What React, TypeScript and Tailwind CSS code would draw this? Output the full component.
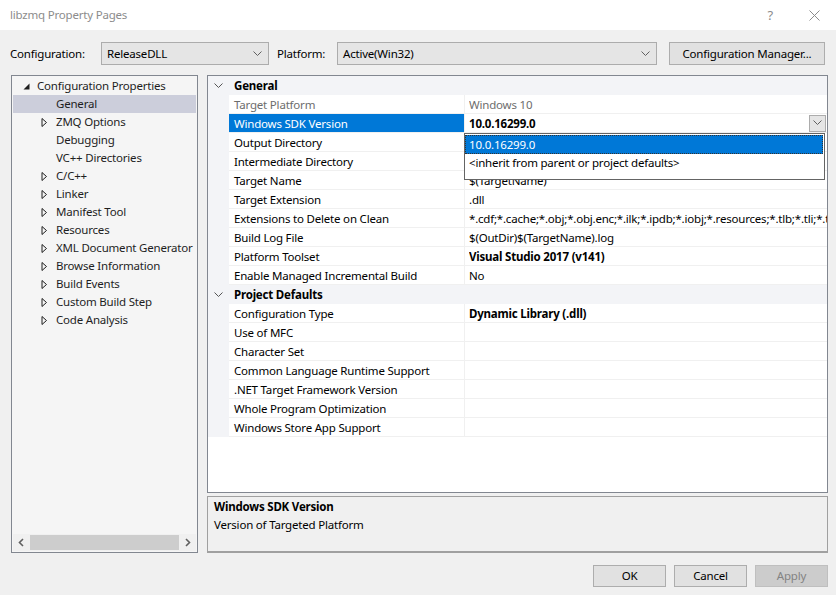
import React from 'react';

const font = "font-['Noto_Sans',sans-serif]";

const Chevron = ({ className = '' }: { className?: string }) => (
  <svg width="9" height="6" viewBox="0 0 9 6" className={className}>
    <path d="M0.5 0.5 L4.5 4.5 L8.5 0.5" fill="none" stroke="currentColor" strokeWidth="1" />
  </svg>
);

const Collapsed = () => (
  <svg width="7" height="9" viewBox="0 0 7 9">
    <path d="M1 0.5 L5.5 4.5 L1 8.5 Z" fill="none" stroke="#1e1e1e" strokeWidth="1" />
  </svg>
);

const Expanded = () => (
  <svg width="7" height="7" viewBox="0 0 7 7">
    <path d="M6.5 0.5 L6.5 6.5 L0.5 6.5 Z" fill="#1e1e1e" />
  </svg>
);

const treeItems: { label: string; expandable: boolean; selected?: boolean }[] = [
  { label: 'General', expandable: false, selected: true },
  { label: 'ZMQ Options', expandable: true },
  { label: 'Debugging', expandable: false },
  { label: 'VC++ Directories', expandable: false },
  { label: 'C/C++', expandable: true },
  { label: 'Linker', expandable: true },
  { label: 'Manifest Tool', expandable: true },
  { label: 'Resources', expandable: true },
  { label: 'XML Document Generator', expandable: true },
  { label: 'Browse Information', expandable: true },
  { label: 'Build Events', expandable: true },
  { label: 'Custom Build Step', expandable: true },
  { label: 'Code Analysis', expandable: true },
];

type Row =
  | { kind: 'cat'; label: string }
  | { kind: 'prop'; name: string; value: string; bold?: boolean; grey?: boolean; active?: boolean };

const rows: Row[] = [
  { kind: 'cat', label: 'General' },
  { kind: 'prop', name: 'Target Platform', value: 'Windows 10', grey: true },
  { kind: 'prop', name: 'Windows SDK Version', value: '10.0.16299.0', bold: true, active: true },
  { kind: 'prop', name: 'Output Directory', value: '$(SolutionDir)$(Configuration)\\' },
  { kind: 'prop', name: 'Intermediate Directory', value: '$(Configuration)\\' },
  { kind: 'prop', name: 'Target Name', value: '$(TargetName)' },
  { kind: 'prop', name: 'Target Extension', value: '.dll' },
  {
    kind: 'prop',
    name: 'Extensions to Delete on Clean',
    value:
      '*.cdf;*.cache;*.obj;*.obj.enc;*.ilk;*.ipdb;*.iobj;*.resources;*.tlb;*.tli;*.tlh;*.tmp;*.rsp;*.pgc;*.pgd;*.meta;*.tlog;*.manifest;*.res;*.pch;*.exp',
  },
  { kind: 'prop', name: 'Build Log File', value: '$(OutDir)$(TargetName).log' },
  { kind: 'prop', name: 'Platform Toolset', value: 'Visual Studio 2017 (v141)', bold: true },
  { kind: 'prop', name: 'Enable Managed Incremental Build', value: 'No' },
  { kind: 'cat', label: 'Project Defaults' },
  { kind: 'prop', name: 'Configuration Type', value: 'Dynamic Library (.dll)', bold: true },
  { kind: 'prop', name: 'Use of MFC', value: '' },
  { kind: 'prop', name: 'Character Set', value: '' },
  { kind: 'prop', name: 'Common Language Runtime Support', value: '' },
  { kind: 'prop', name: '.NET Target Framework Version', value: '' },
  { kind: 'prop', name: 'Whole Program Optimization', value: '' },
  { kind: 'prop', name: 'Windows Store App Support', value: '' },
];

const Combo = ({ value, width }: { value: string; width: string }) => (
  <div className={`${width} h-[23px] flex items-center justify-between bg-[#e5e5e5] border border-[#acacac] pl-[5px] pr-[6px] text-[#000]`}>
    <span>{value}</span>
    <Chevron className="text-[#606060]" />
  </div>
);

const Button = ({ label, disabled }: { label: string; disabled?: boolean }) => (
  <div
    className={`w-[73px] h-[22px] flex items-center justify-center border ${
      disabled ? 'bg-[#cccccc] border-[#bfbfbf] text-[#838383]' : 'bg-[#e1e1e1] border-[#adadad] text-[#000]'
    }`}
  >
    {label}
  </div>
);

export default function App() {
  return (
    <div className={`w-[836px] h-[595px] bg-[#f0f0f0] flex flex-col text-[11.5px] tracking-[-0.2px] leading-none overflow-hidden ${font}`}>
      {/* title bar */}
      <div className="h-[30px] bg-white flex items-center justify-between pl-[10px] pr-[16px] shrink-0">
        <span className="text-[#8c8c8c]">libzmq Property Pages</span>
        <div className="flex items-center gap-[36px] text-[#8c8c8c]">
          <span className="text-[13px]">?</span>
          <svg width="11" height="11" viewBox="0 0 11 11">
            <path d="M0.5 0.5 L10.5 10.5 M10.5 0.5 L0.5 10.5" stroke="#8c8c8c" strokeWidth="1" />
          </svg>
        </div>
      </div>

      {/* configuration row */}
      <div className="h-[45px] flex items-start pt-[12px] pl-[10px] shrink-0">
        <span className="w-[91px] h-[23px] flex items-center">Configuration:</span>
        <Combo value="ReleaseDLL" width="w-[168px]" />
        <span className="ml-[8px] w-[60px] h-[23px] flex items-center">Platform:</span>
        <Combo value="Active(Win32)" width="w-[320px]" />
        <div className="ml-[12px] w-[156px] h-[23px] flex items-center justify-center bg-[#e1e1e1] border border-[#adadad]">
          Configuration Manager...
        </div>
      </div>

      {/* main area */}
      <div className="flex h-[478px] pl-[11px] shrink-0">
        {/* tree */}
        <div className="w-[187px] border border-[#828790] bg-[#f5f5f5] flex flex-col">
          <div className="flex-1 pt-[1px] text-[#1e1e1e] overflow-hidden">
            <div className="h-[18px] flex items-center">
              <span className="w-[25px] shrink-0 flex justify-end pr-[7px]">
                <Expanded />
              </span>
              <span>Configuration Properties</span>
            </div>
            {treeItems.map((item) => (
              <div
                key={item.label}
                className={`h-[18px] flex items-center mx-[1px] whitespace-nowrap ${item.selected ? 'bg-[#cccedb]' : ''}`}
              >
                <span className="w-[43px] shrink-0 flex justify-end pr-[8px]">{item.expandable && <Collapsed />}</span>
                <span>{item.label}</span>
              </div>
            ))}
          </div>
          {/* horizontal scrollbar */}
          <div className="h-[17px] mb-[1px] bg-[#f0f0f0] flex items-center mx-[1px]">
            <svg width="17" height="17" viewBox="0 0 17 17">
              <path d="M10 5 L6.5 8.5 L10 12" fill="none" stroke="#606060" strokeWidth="1.6" />
            </svg>
            <div className="h-[15px] flex-1 bg-[#cdcdcd]" />
            <svg width="17" height="17" viewBox="0 0 17 17">
              <path d="M7 5 L10.5 8.5 L7 12" fill="none" stroke="#606060" strokeWidth="1.6" />
            </svg>
          </div>
        </div>

        {/* right column */}
        <div className="ml-[9px] w-[621px] flex flex-col">
          {/* grid */}
          <div className="h-[418px] border border-[#828790] bg-white relative">
            {rows.map((row, i) =>
              row.kind === 'cat' ? (
                <div key={i} className="h-[19px] flex items-center bg-[#f3f4f7] font-bold text-[#000]">
                  <span className="w-[21px] flex justify-center text-[#555]">
                    <Chevron />
                  </span>
                  <span className="pl-[5px]">{row.label}</span>
                </div>
              ) : (
                <div key={i} className="h-[19px] flex relative">
                  <div className="w-[21px] bg-[#f3f4f7]" />
                  <div
                    className={`w-[236px] flex items-center pl-[5px] pt-[1px] border-b border-r border-[#f0f0f0] whitespace-nowrap ${
                      row.active ? 'bg-[#0078d7] text-white' : row.grey ? 'text-[#6d6d6d]' : 'text-[#000]'
                    }`}
                  >
                    {row.name}
                  </div>
                  <div
                    className={`flex-1 flex items-center pl-[4px] border-b border-[#f0f0f0] whitespace-nowrap overflow-hidden ${
                      row.bold ? 'font-bold' : ''
                    } ${row.grey ? 'text-[#6d6d6d]' : 'text-[#000]'}`}
                  >
                    <span className="flex-1 overflow-hidden leading-[18px] pt-[1px]">{row.value}</span>
                    {row.active && (
                      <span className="w-[17px] h-[17px] mr-[1px] flex items-center justify-center bg-[#e5e5e5] border border-[#acacac] text-[#606060] shrink-0">
                        <Chevron />
                      </span>
                    )}
                  </div>
                  {row.active && (
                    <div className="absolute left-[256px] top-[19px] w-[361px] h-[47px] bg-white border border-[#646464] z-10 pt-[1px] pr-[1px]">
                      <div className="h-[19px] flex items-center pl-[3px] bg-[#0078d7] text-white border border-dotted border-[#333]">
                        10.0.16299.0
                      </div>
                      <div className="h-[18px] flex items-center pl-[4px] text-[#000]">
                        &lt;inherit from parent or project defaults&gt;
                      </div>
                    </div>
                  )}
                </div>
              )
            )}
          </div>

          {/* description */}
          <div className="mt-[3px] h-[57px] border border-[#a0a0a0] border-b-2 border-b-[#a0a0a0] bg-[#f0f0f0] pl-[6px] pt-[4px] flex flex-col gap-[6px] text-[#000]">
            <span className="font-bold">Windows SDK Version</span>
            <span>Version of Targeted Platform</span>
          </div>
        </div>
      </div>

      {/* buttons */}
      <div className="flex justify-end gap-[8px] pr-[8px] pt-[12px]">
        <Button label="OK" />
        <Button label="Cancel" />
        <Button label="Apply" disabled />
      </div>
    </div>
  );
}
